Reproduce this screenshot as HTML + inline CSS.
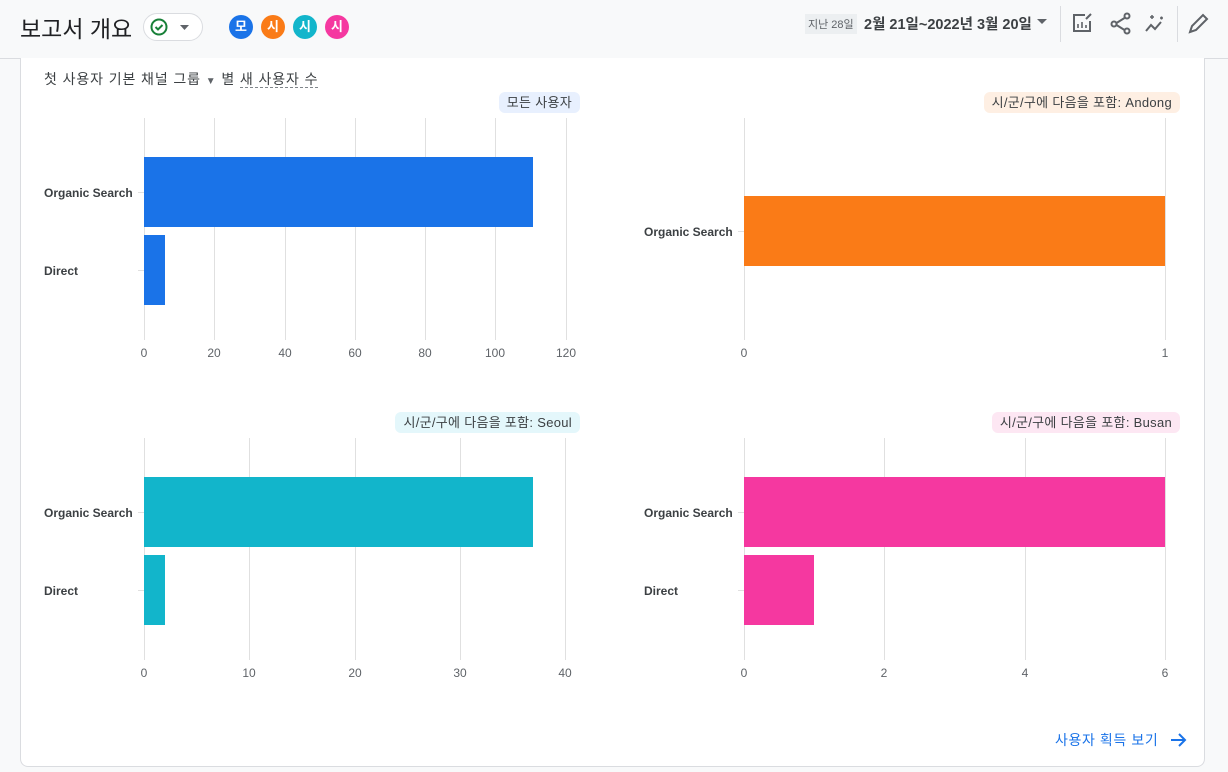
<!DOCTYPE html>
<html><head><meta charset="utf-8"><style>
*{margin:0;padding:0;box-sizing:border-box}
body{width:1228px;height:772px;background:#f8f9fa;font-family:"Liberation Sans","Noto Sans CJK KR",sans-serif;position:relative;overflow:hidden;color:#202124}
.card{position:absolute;left:20px;top:58px;width:1185px;height:709px;background:#fff;border:1px solid #dadce0;border-top:none;border-radius:0 0 8px 8px}
.hline{position:absolute;left:0;top:58px;width:1228px;height:1px;background:#dadce0}
.t{position:absolute;white-space:nowrap}
.dot{position:absolute;top:15px;width:24px;height:24px;border-radius:50%;color:#fff;font-size:13px;text-align:center;line-height:24px;font-weight:bold}
.chip{position:absolute;height:21px;border-radius:6px;font-size:13px;line-height:21px;padding:0 8px;color:#3c4043;letter-spacing:0.3px}
</style></head><body>
<div class="t" style="left:20px;top:10px;font-size:23px;color:#202124">보고서 개요</div>
<div style="position:absolute;left:143px;top:13px;width:60px;height:28px;border:1px solid #dadce0;border-radius:14px;background:#fff">
<svg width="60" height="28" style="position:absolute;left:-1px;top:-1px"><circle cx="16" cy="14" r="7.5" fill="none" stroke="#188038" stroke-width="2"/><path d="M12.5 14l2.5 2.5 4.5-4.5" fill="none" stroke="#188038" stroke-width="2"/><path d="M37 12h9l-4.5 5z" fill="#5f6368"/></svg></div>
<div class="dot" style="left:229px;background:#1a73e8">모</div>
<div class="dot" style="left:261px;background:#fa7b17">시</div>
<div class="dot" style="left:293px;background:#12b5cb">시</div>
<div class="dot" style="left:325px;background:#f538a0">시</div>
<div class="t" style="left:805px;top:14px;background:#eceff1;font-size:11px;padding:2px 3px;color:#5f6368">지난 28일</div>
<div class="t" style="left:864px;top:13px;font-size:14.5px;font-weight:bold;color:#3c4043">2월 21일~2022년 3월 20일</div>
<svg style="position:absolute;left:1037px;top:18px" width="12" height="8"><path d="M0 1h10l-5 5z" fill="#5f6368"/></svg>
<div style="position:absolute;left:1060px;top:6px;width:1px;height:36px;background:#dadce0"></div>
<div style="position:absolute;left:1177px;top:6px;width:1px;height:36px;background:#dadce0"></div>
<svg style="position:absolute;left:1070px;top:10px" width="140" height="30" fill="none" stroke="#5f6368" stroke-width="2">
<path d="M15 5H4v16h16V11"/><path d="M8 18v-4M12 18v-6M16 18v-3" stroke-width="1.6"/><path d="M16 9l5-5"/>
<circle cx="57" cy="6" r="2.5"/><circle cx="44" cy="14" r="2.5"/><circle cx="57" cy="21" r="2.5"/><path d="M46.5 13l8-5M46.5 15l8 5"/>
<path d="M76 21l5-6 4 4 6-7" /><path d="M80 7h4M82 5v4M90 8h3M91.5 6.5v3" stroke-width="1.5"/>
<path d="M120 22l2-6 11-11 4 4-11 11z"/></svg>
<div class="hline"></div>
<div class="card"></div>
<div class="t" style="left:44px;top:69px;font-size:14px;color:#3c4043;letter-spacing:0.9px">첫 사용자 기본 채널 그룹 <span style="font-size:10px;color:#5f6368">▼</span> 별 <span style="border-bottom:1px dashed #80868b">새 사용자 수</span></div>

<div class="chip" style="right:648px;top:92px;background:#e8f0fe">모든 사용자</div>
<div class="chip" style="right:48px;top:92px;background:#feefe3">시/군/구에 다음을 포함: Andong</div>
<div class="chip" style="right:648px;top:412px;background:#e4f7fb">시/군/구에 다음을 포함: Seoul</div>
<div class="chip" style="right:48px;top:412px;background:#fde7f3">시/군/구에 다음을 포함: Busan</div>

<svg style="position:absolute;left:0;top:0" width="1228" height="772" font-family="Liberation Sans, sans-serif" font-size="12">
<g stroke="#e0e0e0" stroke-width="1">
<path d="M144.5 118v222M214.5 118v222M285.5 118v222M355.5 118v222M425.5 118v222M495.5 118v222M566.5 118v222"/>
<path d="M744.5 118v222M1165.5 118v222"/>
<path d="M144.5 438v222M249.5 438v222M355.5 438v222M460.5 438v222M565.5 438v222"/>
<path d="M744.5 438v222M884.5 438v222M1025.5 438v222M1165.5 438v222"/>
<path d="M138 192.5h6M138 270.5h6M738 231.5h6M138 512.5h6M138 590.5h6M738 512.5h6M738 590.5h6"/>
</g>
<rect x="144" y="157" width="389" height="70" fill="#1a73e8"/>
<rect x="144" y="235" width="21" height="70" fill="#1a73e8"/>
<rect x="744" y="196" width="421" height="70" fill="#fa7b17"/>
<rect x="144" y="477" width="389" height="70" fill="#12b5cb"/>
<rect x="144" y="555" width="21" height="70" fill="#12b5cb"/>
<rect x="744" y="477" width="421" height="70" fill="#f538a0"/>
<rect x="744" y="555" width="70" height="70" fill="#f538a0"/>
<g fill="#3c4043" font-weight="bold">
<text x="44" y="197">Organic Search</text><text x="44" y="275">Direct</text>
<text x="644" y="236">Organic Search</text>
<text x="44" y="517">Organic Search</text><text x="44" y="595">Direct</text>
<text x="644" y="517">Organic Search</text><text x="644" y="595">Direct</text>
</g>
<g fill="#5f6368" text-anchor="middle">
<text x="144" y="357">0</text><text x="214" y="357">20</text><text x="285" y="357">40</text><text x="355" y="357">60</text><text x="425" y="357">80</text><text x="495" y="357">100</text><text x="566" y="357">120</text>
<text x="744" y="357">0</text><text x="1165" y="357">1</text>
<text x="144" y="677">0</text><text x="249" y="677">10</text><text x="355" y="677">20</text><text x="460" y="677">30</text><text x="565" y="677">40</text>
<text x="744" y="677">0</text><text x="884" y="677">2</text><text x="1025" y="677">4</text><text x="1165" y="677">6</text>
</g>
<path d="M1171 740h14M1179 734l6 6-6 6" stroke="#1a73e8" stroke-width="2" fill="none"/>
</svg>
<div class="t" style="left:1055px;top:730px;font-size:14px;color:#1a73e8;letter-spacing:0.6px">사용자 획득 보기</div>
</body></html>
